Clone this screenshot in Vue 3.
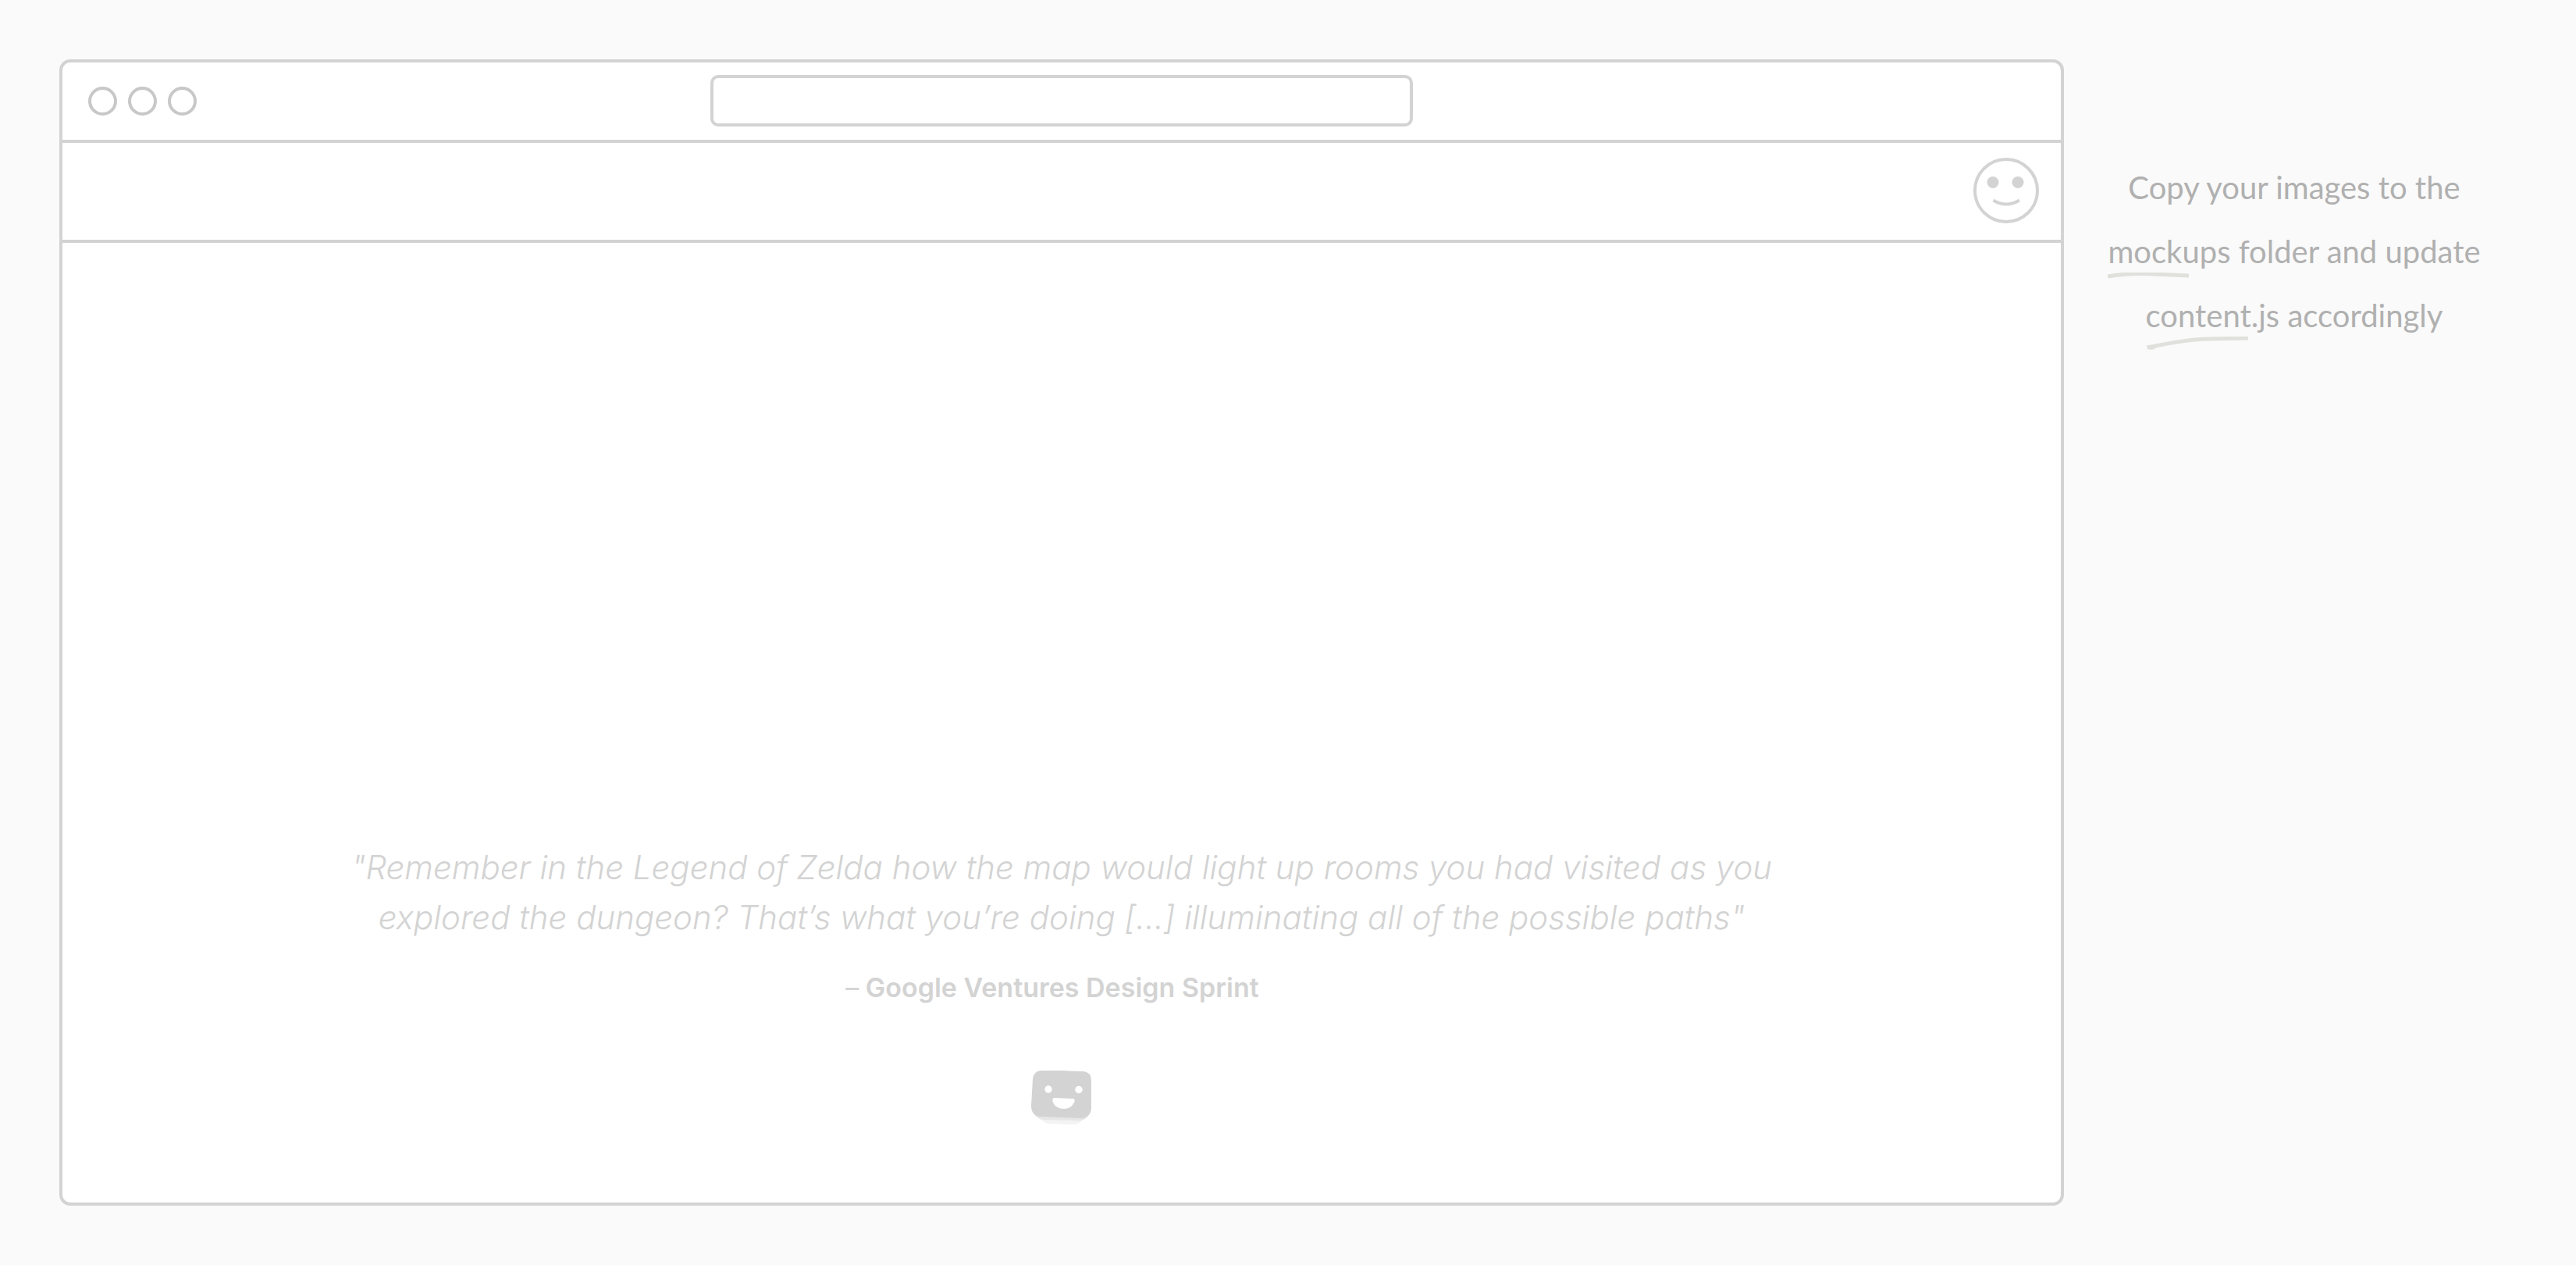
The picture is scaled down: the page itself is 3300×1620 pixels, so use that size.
<script setup>
const windowButtons = ['Close', 'Minimize', 'Maximize']
</script>

<template>
  <div class="page">
    <main class="browser">
      <header class="chrome">
        <div class="lights">
          <button v-for="name in windowButtons" :key="name" type="button" class="light" :aria-label="name"></button>
        </div>
        <input class="address" type="text" aria-label="Address" />
      </header>
      <nav class="toolbar">
        <svg class="avatar" viewBox="0 0 84 84" role="img" aria-label="Profile">
          <circle cx="42" cy="42" r="40" fill="none" stroke="#d3d3d3" stroke-width="4" />
          <circle cx="25" cy="31.5" r="7.5" fill="#d3d3d3" />
          <circle cx="57" cy="31.5" r="7.5" fill="#d3d3d3" />
          <path d="M25.5 54.5Q42 64.500 59 54.500" fill="none" stroke="#d3d3d3" stroke-width="4" />
        </svg>
      </nav>
      <section class="content">
        <blockquote class="quote">
          <p class="words">
            "Remember in the Legend of Zelda how the map would light up rooms you had visited as you<br />
            explored the dungeon? That’s what you’re doing […] illuminating all of the possible paths"
          </p>
          <footer class="source"><span class="dash">–</span> Google Ventures Design Sprint</footer>
        </blockquote>
        <svg class="logo" viewBox="0 0 78 70" role="img" aria-label="Logo">
          <path d="M8 58L68 60Q63 69 53 69L22 68Q15 67 8 58Z" fill="#f3f3f3" />
          <path d="M4 56L73 58Q68 65 59 64L16 63Q9 63 4 56Z" fill="#e6e6e6" />
          <path d="M12 0L41 0Q54 1 67 1Q77 2 77 13L77 47Q77 60 64 61L39 60L12 59Q0 58 0 45L2 11Q3 1 12 0Z" fill="#d3d3d3" />
          <circle cx="22" cy="24" r="4.700" fill="#fff" />
          <circle cx="61" cy="24.500" r="4.700" fill="#fff" />
          <path d="M30 35L53 36Q57 36 55 41Q51 49 42 49Q32 49 28 41Q26 35 30 35Z" fill="#fff" />
        </svg>
      </section>
    </main>
    <aside class="note">
      <p class="hint">
        Copy your images to the<br />
        <span class="marked">mockups<svg class="stroke" viewBox="0 0 104 18" aria-hidden="true">
          <path d="M0 5Q28 0 60 2L104 4" fill="none" stroke="#e0e0dc" stroke-width="5" />
        </svg></span> folder and update<br />
        <span class="marked">content.js<svg class="stroke long" viewBox="0 0 132 24" aria-hidden="true">
          <path d="M2 14Q55 3 82 3L131 2" fill="none" stroke="#e0e0dc" stroke-width="5" />
          <path d="M1 11L10 12L14 14L8 17L2 16Z" fill="#e0e0dc" />
        </svg></span> accordingly
      </p>
    </aside>
  </div>
</template>

<style>
body {
  margin: 0;
  background: #fafafa;
}
</style>

<style scoped>
.page {
  box-sizing: border-box;
  min-height: 100vh;
  padding: 76px;
  display: flex;
  background: #fafafa;
}

.browser {
  box-sizing: border-box;
  flex: 1;
  min-width: 0;
  display: flex;
  flex-direction: column;
  border: 4px solid #d3d3d3;
  border-radius: 14px;
  background: #fff;
}

.chrome {
  display: grid;
  grid-template-columns: 1fr calc(35% + 4px) 1fr;
  padding: 16px 0 17px;
  border-bottom: 4px solid #d3d3d3;
}

.lights {
  display: flex;
  align-items: center;
  gap: 14px;
  padding: 0 0 0 33px;
}

.light {
  box-sizing: border-box;
  width: 37px;
  height: 37px;
  padding: 0;
  border: 4px solid #c8c8c8;
  border-radius: 50%;
  background: none;
}

.address {
  box-sizing: border-box;
  width: 100%;
  height: 66px;
  padding: 0 16px;
  border: 4px solid #d3d3d3;
  border-radius: 10px;
  background: #fff;
  color: #b0b0b0;
  font: 28px Inter, sans-serif;
}

.toolbar {
  display: flex;
  justify-content: flex-end;
  padding: 19px 28px 21px;
  border-bottom: 4px solid #d3d3d3;
}

.avatar {
  width: 84px;
  height: 84px;
}

.content {
  flex: 1;
  display: flex;
  flex-direction: column;
  justify-content: flex-end;
  align-items: center;
  padding: 80px 0 99px;
}

.quote {
  margin: 0 0 82px;
  color: #d3d3d3;
  text-align: center;
  font-family: Inter, sans-serif;
}

.words {
  margin: 0 0 34px;
  font-size: 42px;
  font-style: italic;
  font-weight: 300;
  line-height: 64px;
}

.source {
  padding-right: 24px;
  font-size: 34px;
  font-weight: 600;
  line-height: 48px;
}

.dash {
  font-weight: 400;
}

.logo {
  width: 78px;
  height: 70px;
}

.note {
  width: 580px;
  padding-top: 123px;
}

.hint {
  margin: 0;
  padding-left: 10px;
  color: #b0b0b0;
  text-align: center;
  white-space: nowrap;
  font-family: Lato, sans-serif;
  font-size: 40px;
  font-weight: 400;
  line-height: 82px;
}

.marked {
  position: relative;
}

.stroke {
  position: absolute;
  left: 0;
  top: 100%;
  width: 104px;
  height: 18px;
  margin-top: 3px;
}

.stroke.long {
  width: 132px;
  height: 24px;
}
</style>
